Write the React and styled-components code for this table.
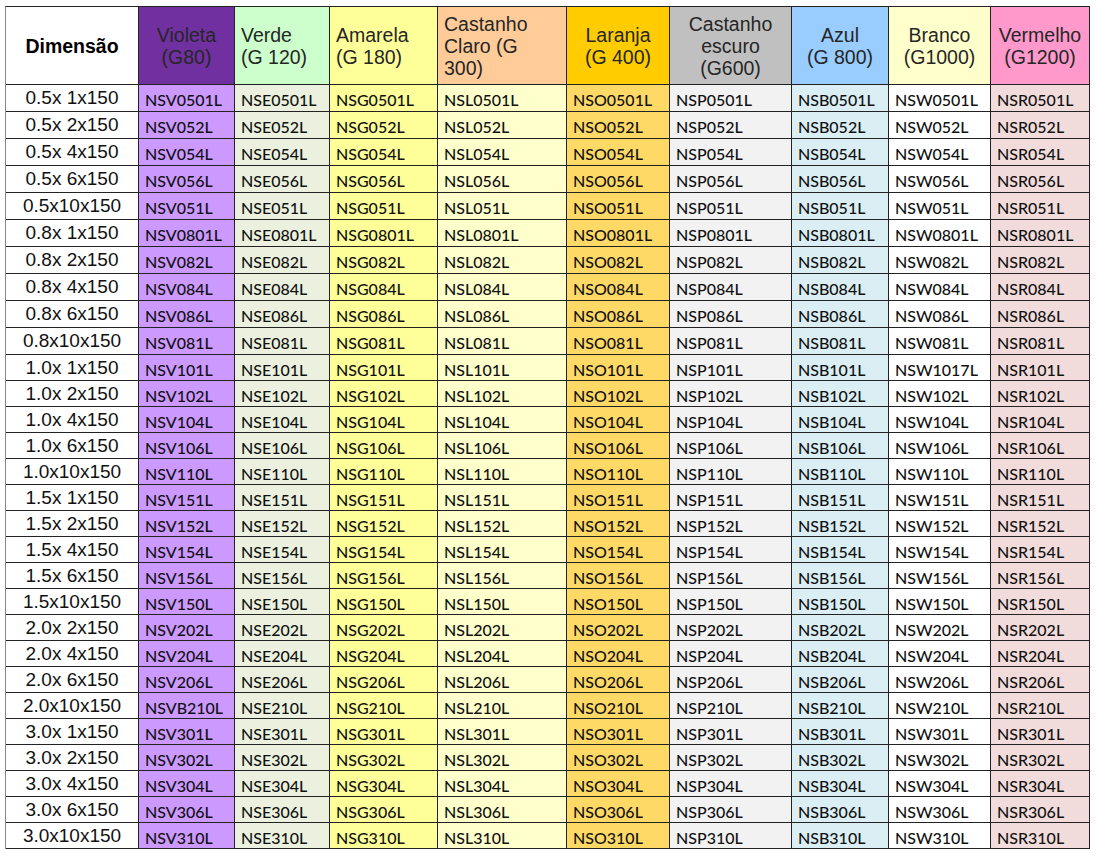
import React from 'react';
import styled, { createGlobalStyle } from 'styled-components';

const GlobalStyle = createGlobalStyle`
  html, body {
    margin: 0;
    padding: 0;
    background: #fff;
  }
  body {
    font-family: "Liberation Sans", Arial, sans-serif;
  }
`;

// colour columns: header colour, data colour, prefix, header alignment
const columns = [
  { title: ['Violeta', '(G80)'], head: '#7030a0', cell: '#cc99ff', prefix: 'NSV', align: 'center' },
  { title: ['Verde', '(G 120)'], head: '#ccffcc', cell: '#ebf1de', prefix: 'NSE', align: 'left' },
  { title: ['Amarela', '(G 180)'], head: '#ffff99', cell: '#ffff99', prefix: 'NSG', align: 'left' },
  { title: ['Castanho', 'Claro (G', '300)'], head: '#ffcc99', cell: '#ffffcc', prefix: 'NSL', align: 'left' },
  { title: ['Laranja', '(G 400)'], head: '#ffcc00', cell: '#ffd966', prefix: 'NSO', align: 'center' },
  { title: ['Castanho', 'escuro', '(G600)'], head: '#c0c0c0', cell: '#f2f2f2', prefix: 'NSP', align: 'center' },
  { title: ['Azul', '(G 800)'], head: '#99ccff', cell: '#daeef3', prefix: 'NSB', align: 'center' },
  { title: ['Branco', '(G1000)'], head: '#ffffcc', cell: '#ffffff', prefix: 'NSW', align: 'center' },
  { title: ['Vermelho', '(G1200)'], head: '#ff99cc', cell: '#f2dcdb', prefix: 'NSR', align: 'center' },
];

const rows = [
  ['0.5x 1x150', '0501'], ['0.5x 2x150', '052'], ['0.5x 4x150', '054'], ['0.5x 6x150', '056'], ['0.5x10x150', '051'],
  ['0.8x 1x150', '0801'], ['0.8x 2x150', '082'], ['0.8x 4x150', '084'], ['0.8x 6x150', '086'], ['0.8x10x150', '081'],
  ['1.0x 1x150', '101'], ['1.0x 2x150', '102'], ['1.0x 4x150', '104'], ['1.0x 6x150', '106'], ['1.0x10x150', '110'],
  ['1.5x 1x150', '151'], ['1.5x 2x150', '152'], ['1.5x 4x150', '154'], ['1.5x 6x150', '156'], ['1.5x10x150', '150'],
  ['2.0x 2x150', '202'], ['2.0x 4x150', '204'], ['2.0x 6x150', '206'], ['2.0x10x150', '210'],
  ['3.0x 1x150', '301'], ['3.0x 2x150', '302'], ['3.0x 4x150', '304'], ['3.0x 6x150', '306'], ['3.0x10x150', '310'],
];

// the few cells that break the pattern in the source sheet
const oddCodes = {
  'NSW101': 'NSW1017L',
  'NSV210': 'NSVB210L',
};

const codeFor = (prefix, num) => oddCodes[prefix + num] || `${prefix}${num}L`;

const Sheet = styled.div`
  display: grid;
  grid-template-columns: 133px 96px 95px 108px 129px 103px 122px 97px 102px 99px;
  grid-template-rows: 78px repeat(10, 27px) repeat(19, 26px);
  margin: 6px 0 0 5px;
  width: max-content;
  border-top: 1px solid #222;
  border-left: 1px solid #8a8a8a;
`;

const Cell = styled.div`
  box-sizing: border-box;
  border-right: 1px solid #222;
  border-bottom: 1px solid #222;
  display: flex;
  align-items: center;
  overflow: hidden;
  white-space: nowrap;
`;

const HeadCell = styled(Cell)`
  background: ${(p) => p.$bg};
  flex-direction: column;
  justify-content: center;
  align-items: ${(p) => (p.$align === 'left' ? 'flex-start' : 'center')};
  padding: ${(p) => (p.$align === 'left' ? '0 0 0 6px' : '0')};
  font-family: "Liberation Sans", Arial, sans-serif;
  font-size: 19.5px;
  line-height: 22px;
  font-weight: ${(p) => (p.$bold ? 700 : 400)};
  color: ${(p) => (p.$bold ? '#000' : '#262626')};
  text-align: ${(p) => p.$align};
`;

const DimCell = styled(Cell)`
  background: #fff;
  justify-content: center;
  font-family: "Liberation Sans", Arial, sans-serif;
  font-size: 19px;
  color: #111;
`;

const CodeCell = styled(Cell)`
  background: ${(p) => p.$bg};
  padding: 3px 0 0 6px;
  font-family: Lato, "Open Sans", sans-serif;
  font-size: 16px;
  font-weight: 500;
  color: #111;
`;

export default function App() {
  return (
    <>
      <GlobalStyle />
      <Sheet>
        <HeadCell $bg="#fff" $align="center" $bold>Dimensão</HeadCell>
        {columns.map((c) => (
          <HeadCell key={c.prefix} $bg={c.head} $align={c.align}>
            {c.title.map((line) => (
              <span key={line}>{line}</span>
            ))}
          </HeadCell>
        ))}
        {rows.map(([dim, num]) => (
          <React.Fragment key={dim}>
            <DimCell>{dim}</DimCell>
            {columns.map((c) => (
              <CodeCell key={c.prefix} $bg={c.cell}>
                {codeFor(c.prefix, num)}
              </CodeCell>
            ))}
          </React.Fragment>
        ))}
      </Sheet>
    </>
  );
}
